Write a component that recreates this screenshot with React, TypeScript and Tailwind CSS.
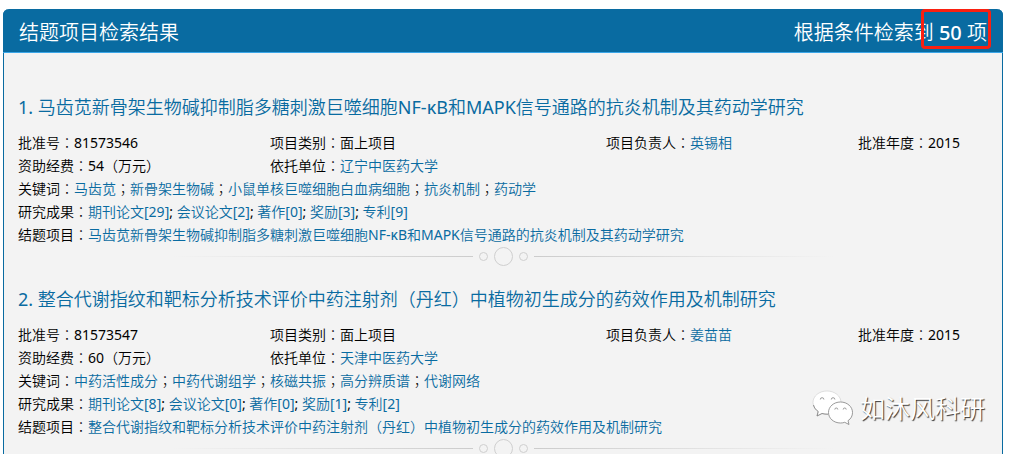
import React from 'react';

const TEXT = "font-['Noto_Sans','Noto_Sans_CJK_SC_DemiLight','Noto_Sans_CJK_SC',sans-serif]";

type Achievement = { name: string; count: number };

type Project = {
  index: number;
  title: string;
  approval: string;
  category: string;
  leader: string;
  year: string;
  funding: string;
  unit: string;
  keywords: string[];
  achievements: Achievement[];
};

const projects: Project[] = [
  {
    index: 1,
    title: '马齿苋新骨架生物碱抑制脂多糖刺激巨噬细胞NF-κB和MAPK信号通路的抗炎机制及其药动学研究',
    approval: '81573546',
    category: '面上项目',
    leader: '英锡相',
    year: '2015',
    funding: '54（万元）',
    unit: '辽宁中医药大学',
    keywords: ['马齿苋', '新骨架生物碱', '小鼠单核巨噬细胞白血病细胞', '抗炎机制', '药动学'],
    achievements: [
      { name: '期刊论文', count: 29 },
      { name: '会议论文', count: 2 },
      { name: '著作', count: 0 },
      { name: '奖励', count: 3 },
      { name: '专利', count: 9 },
    ],
  },
  {
    index: 2,
    title: '整合代谢指纹和靶标分析技术评价中药注射剂（丹红）中植物初生成分的药效作用及机制研究',
    approval: '81573547',
    category: '面上项目',
    leader: '姜苗苗',
    year: '2015',
    funding: '60（万元）',
    unit: '天津中医药大学',
    keywords: ['中药活性成分', '中药代谢组学', '核磁共振', '高分辨质谱', '代谢网络'],
    achievements: [
      { name: '期刊论文', count: 8 },
      { name: '会议论文', count: 0 },
      { name: '著作', count: 0 },
      { name: '奖励', count: 1 },
      { name: '专利', count: 2 },
    ],
  },
];

/* Full-width punctuation centred in its cell. */
function Mark({ children }: { children: string }) {
  return <span className="font-['Noto_Sans_CJK_TC',sans-serif] font-light">{children}</span>;
}

function Link({ children }: { children: React.ReactNode }) {
  return (
    <a href="#" className="text-[#096ba1] hover:underline">
      {children}
    </a>
  );
}

function Field({ label, children }: { label: string; children: React.ReactNode }) {
  return (
    <div className="flex whitespace-nowrap">
      <dt>
        {label}
        <Mark>：</Mark>
      </dt>
      <dd>{children}</dd>
    </div>
  );
}

function Divider() {
  return (
    <div className="-mr-1 flex h-5 items-center justify-center" aria-hidden="true">
      <div className="h-px w-[31%] bg-linear-to-r from-transparent to-[#cccccc]" />
      <div className="flex items-center gap-1.5 px-1.5">
        <div className="size-[9px] rounded-full border border-[#cfcfcf]" />
        <div className="size-[19px] rounded-full border border-[#cfcfcf]" />
        <div className="size-[9px] rounded-full border border-[#cfcfcf]" />
      </div>
      <div className="h-px w-[31%] bg-linear-to-l from-transparent to-[#cccccc]" />
    </div>
  );
}

function ProjectItem({ project }: { project: Project }) {
  return (
    <li>
      <h2 className="text-lg leading-6 whitespace-nowrap">
        <Link>
          {project.index}. {project.title}
        </Link>
      </h2>
      <dl className="pt-3 text-sm leading-[23px]">
        <div className="grid grid-cols-[3fr_4fr_3fr_1.5fr]">
          <Field label="批准号">{project.approval}</Field>
          <Field label="项目类别">{project.category}</Field>
          <Field label="项目负责人">
            <Link>{project.leader}</Link>
          </Field>
          <Field label="批准年度">{project.year}</Field>
          <Field label="资助经费">{project.funding}</Field>
          <Field label="依托单位">
            <Link>{project.unit}</Link>
          </Field>
        </div>
        <Field label="关键词">
          {project.keywords.map((word, i) => (
            <React.Fragment key={word}>
              {i > 0 && <Mark>；</Mark>}
              <Link>{word}</Link>
            </React.Fragment>
          ))}
        </Field>
        <Field label="研究成果">
          {project.achievements.map((a, i) => (
            <React.Fragment key={a.name}>
              {i > 0 && '; '}
              <Link>
                {a.name}[{a.count}]
              </Link>
            </React.Fragment>
          ))}
        </Field>
        <Field label="结题项目">
          <Link>{project.title}</Link>
        </Field>
      </dl>
      <Divider />
    </li>
  );
}

function Watermark() {
  return (
    <div className="absolute right-8 bottom-7 flex items-center gap-1.5">
      <svg width="42" height="36" viewBox="0 0 42 36" aria-hidden="true">
        <path
          fill="#ffffff"
          stroke="#cccccc"
          strokeWidth="0.6"
          d="M15 1C7.200 1 1 6 1 12.500C1 16.200 3 19.400 6.200 21.500L5 26L10 23.500C11.500 24 13.200 24.200 15 24.200C22.700 24.200 29 19 29 12.500C29 6 22.700 1 15 1Z"
        />
        <path fill="none" stroke="#777777" strokeWidth="0.8" d="M1.500 15C2.300 18 4 20 6.200 21.500L5 26L10 23.500C12 24.100 14 24.200 16 24.200" />
        <path
          fill="#ffffff"
          stroke="#808080"
          strokeWidth="0.8"
          d="M28.500 12C21.800 12 16.500 16.600 16.500 22.500C16.500 28.400 21.800 33 28.500 33C30 33 31.400 32.800 32.700 32.300L37 34.500L36 30.700C39 28.800 40.500 25.800 40.500 22.500C40.500 16.600 35.100 12 28.500 12Z"
        />
        <path
          fill="none"
          stroke="#999999"
          d="M8.300 9.500a1.800 1.800 0 0 1 3.600 0M19.300 9.500a1.800 1.800 0 0 1 3.600 0M22.800 19.500a1.500 1.500 0 0 1 3 0M31.200 19.500a1.500 1.500 0 0 1 3 0"
        />
      </svg>
      <span className="text-[25px] leading-9 text-white [text-shadow:1px_1px_1px_#333333]">如沐风科研</span>
    </div>
  );
}

export default function App() {
  return (
    <div className={`relative flex h-screen flex-col overflow-hidden bg-white pt-[9px] pr-3.5 pl-[3px] text-black ${TEXT}`}>
      <main className="grow rounded-t-md border-x border-[#096ba1] bg-[#f3f3f3]">
        <header className="-mx-px flex h-11 items-center justify-between rounded-t-md border-b border-[#3aa6e8] bg-[#096ba1] px-4 pt-1 text-xl leading-7 text-white">
          <h1>结题项目检索结果</h1>
          <p className="relative">
            根据条件检索到 <span className="font-medium">50</span> 项
            <span className="absolute -top-2.5 -right-1 h-10 w-[70px] rounded-sm border-3 border-[#fa2010]" aria-hidden="true" />
          </p>
        </header>
        <ol className="flex flex-col gap-[21px] pt-[42px] pr-[18px] pl-3.5">
          {projects.map((p) => (
            <ProjectItem key={p.index} project={p} />
          ))}
        </ol>
      </main>
      <Watermark />
    </div>
  );
}
